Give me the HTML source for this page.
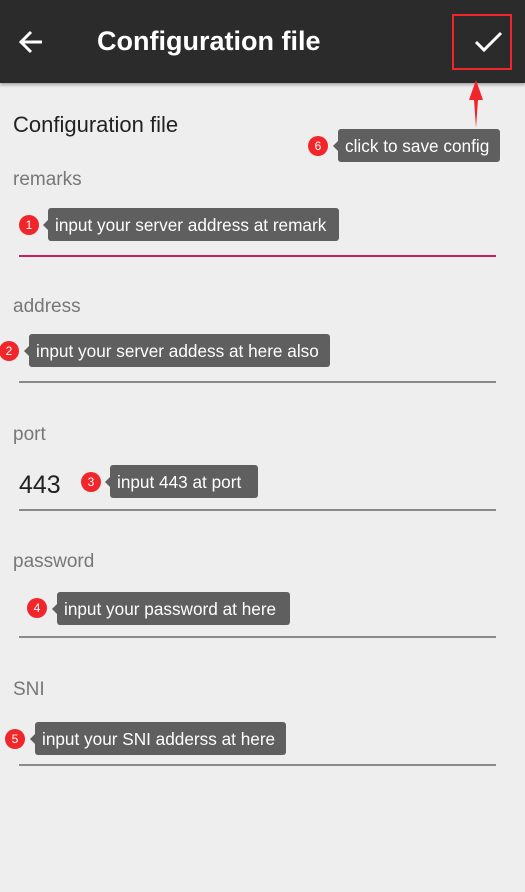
<!DOCTYPE html><html><head><style>
body{margin:0;width:525px;height:892px;background:#eeeeee;position:relative;overflow:hidden;font-family:"Liberation Sans",sans-serif}
.a{position:absolute}
.hdr{left:0;top:0;width:525px;height:83px;background:#2b2b2b;box-shadow:0 2px 3px rgba(0,0,0,.3)}
.lbl{font-size:19px;color:#777;left:13px}
.ln{left:19px;width:477px;height:2px;background:#8a8a8a}
.tip{background:#5f5f5f;color:#fff;font-size:17.2px;border-radius:3px;height:33px;line-height:35px;padding-left:7px;box-sizing:border-box;white-space:nowrap}
.tip:before{content:"";position:absolute;left:-5px;top:12px;border:5px solid transparent;border-left:0;border-right-color:#5f5f5f}
.c{width:20px;height:20px;border-radius:50%;background:#f0262a;color:#fff;font-size:12px;text-align:center;line-height:20px}
</style></head><body>
<div class="a hdr"></div>
<svg class="a" style="left:17px;top:28px" width="28" height="28" viewBox="0 0 28 28"><path d="M25 14H4M14 4L4 14L14 24" stroke="#fff" stroke-width="3" fill="none"/></svg>
<div class="a" style="left:97px;top:26px;font-size:27px;font-weight:bold;color:#fff">Configuration file</div>
<svg class="a" style="left:474px;top:30px" width="30" height="24" viewBox="0 0 30 24"><path d="M2 12L10 20L27 3" stroke="#fff" stroke-width="3" fill="none"/></svg>
<div class="a" style="left:452px;top:14px;width:56px;height:52px;border:2px solid #f0262a"></div>
<svg class="a" style="left:466px;top:78px" width="20" height="52" viewBox="0 0 20 52"><path d="M10 2L3 22H8L10 50L12 22H17Z" fill="#f0262a"/></svg>
<div class="a" style="left:13px;top:112px;font-size:22px;color:#222">Configuration file</div>
<div class="a lbl" style="top:169px">remarks</div>
<div class="a lbl" style="top:296px">address</div>
<div class="a lbl" style="top:424px">port</div>
<div class="a lbl" style="top:551px">password</div>
<div class="a lbl" style="top:679px">SNI</div>
<div class="a ln" style="top:255px;background:#d81b60"></div>
<div class="a ln" style="top:381px"></div>
<div class="a ln" style="top:509px"></div>
<div class="a ln" style="top:636px"></div>
<div class="a ln" style="top:764px"></div>
<div class="a" style="left:19px;top:471px;font-size:25px;color:#222">443</div>
<div class="a c" style="left:308px;top:136px">6</div><div class="a tip" style="left:338px;top:129px;width:162px">click to save config</div>
<div class="a c" style="left:19px;top:215px">1</div><div class="a tip" style="left:48px;top:208px;width:291px">input your server address at remark</div>
<div class="a c" style="left:-1px;top:341px">2</div><div class="a tip" style="left:29px;top:334px;width:301px">input your server addess at here also</div>
<div class="a c" style="left:81px;top:472px">3</div><div class="a tip" style="left:110px;top:465px;width:148px">input 443 at port</div>
<div class="a c" style="left:27px;top:598px">4</div><div class="a tip" style="left:57px;top:592px;width:233px">input your password at here</div>
<div class="a c" style="left:5px;top:729px">5</div><div class="a tip" style="left:35px;top:722px;width:251px">input your SNI adderss at here</div>
</body></html>
